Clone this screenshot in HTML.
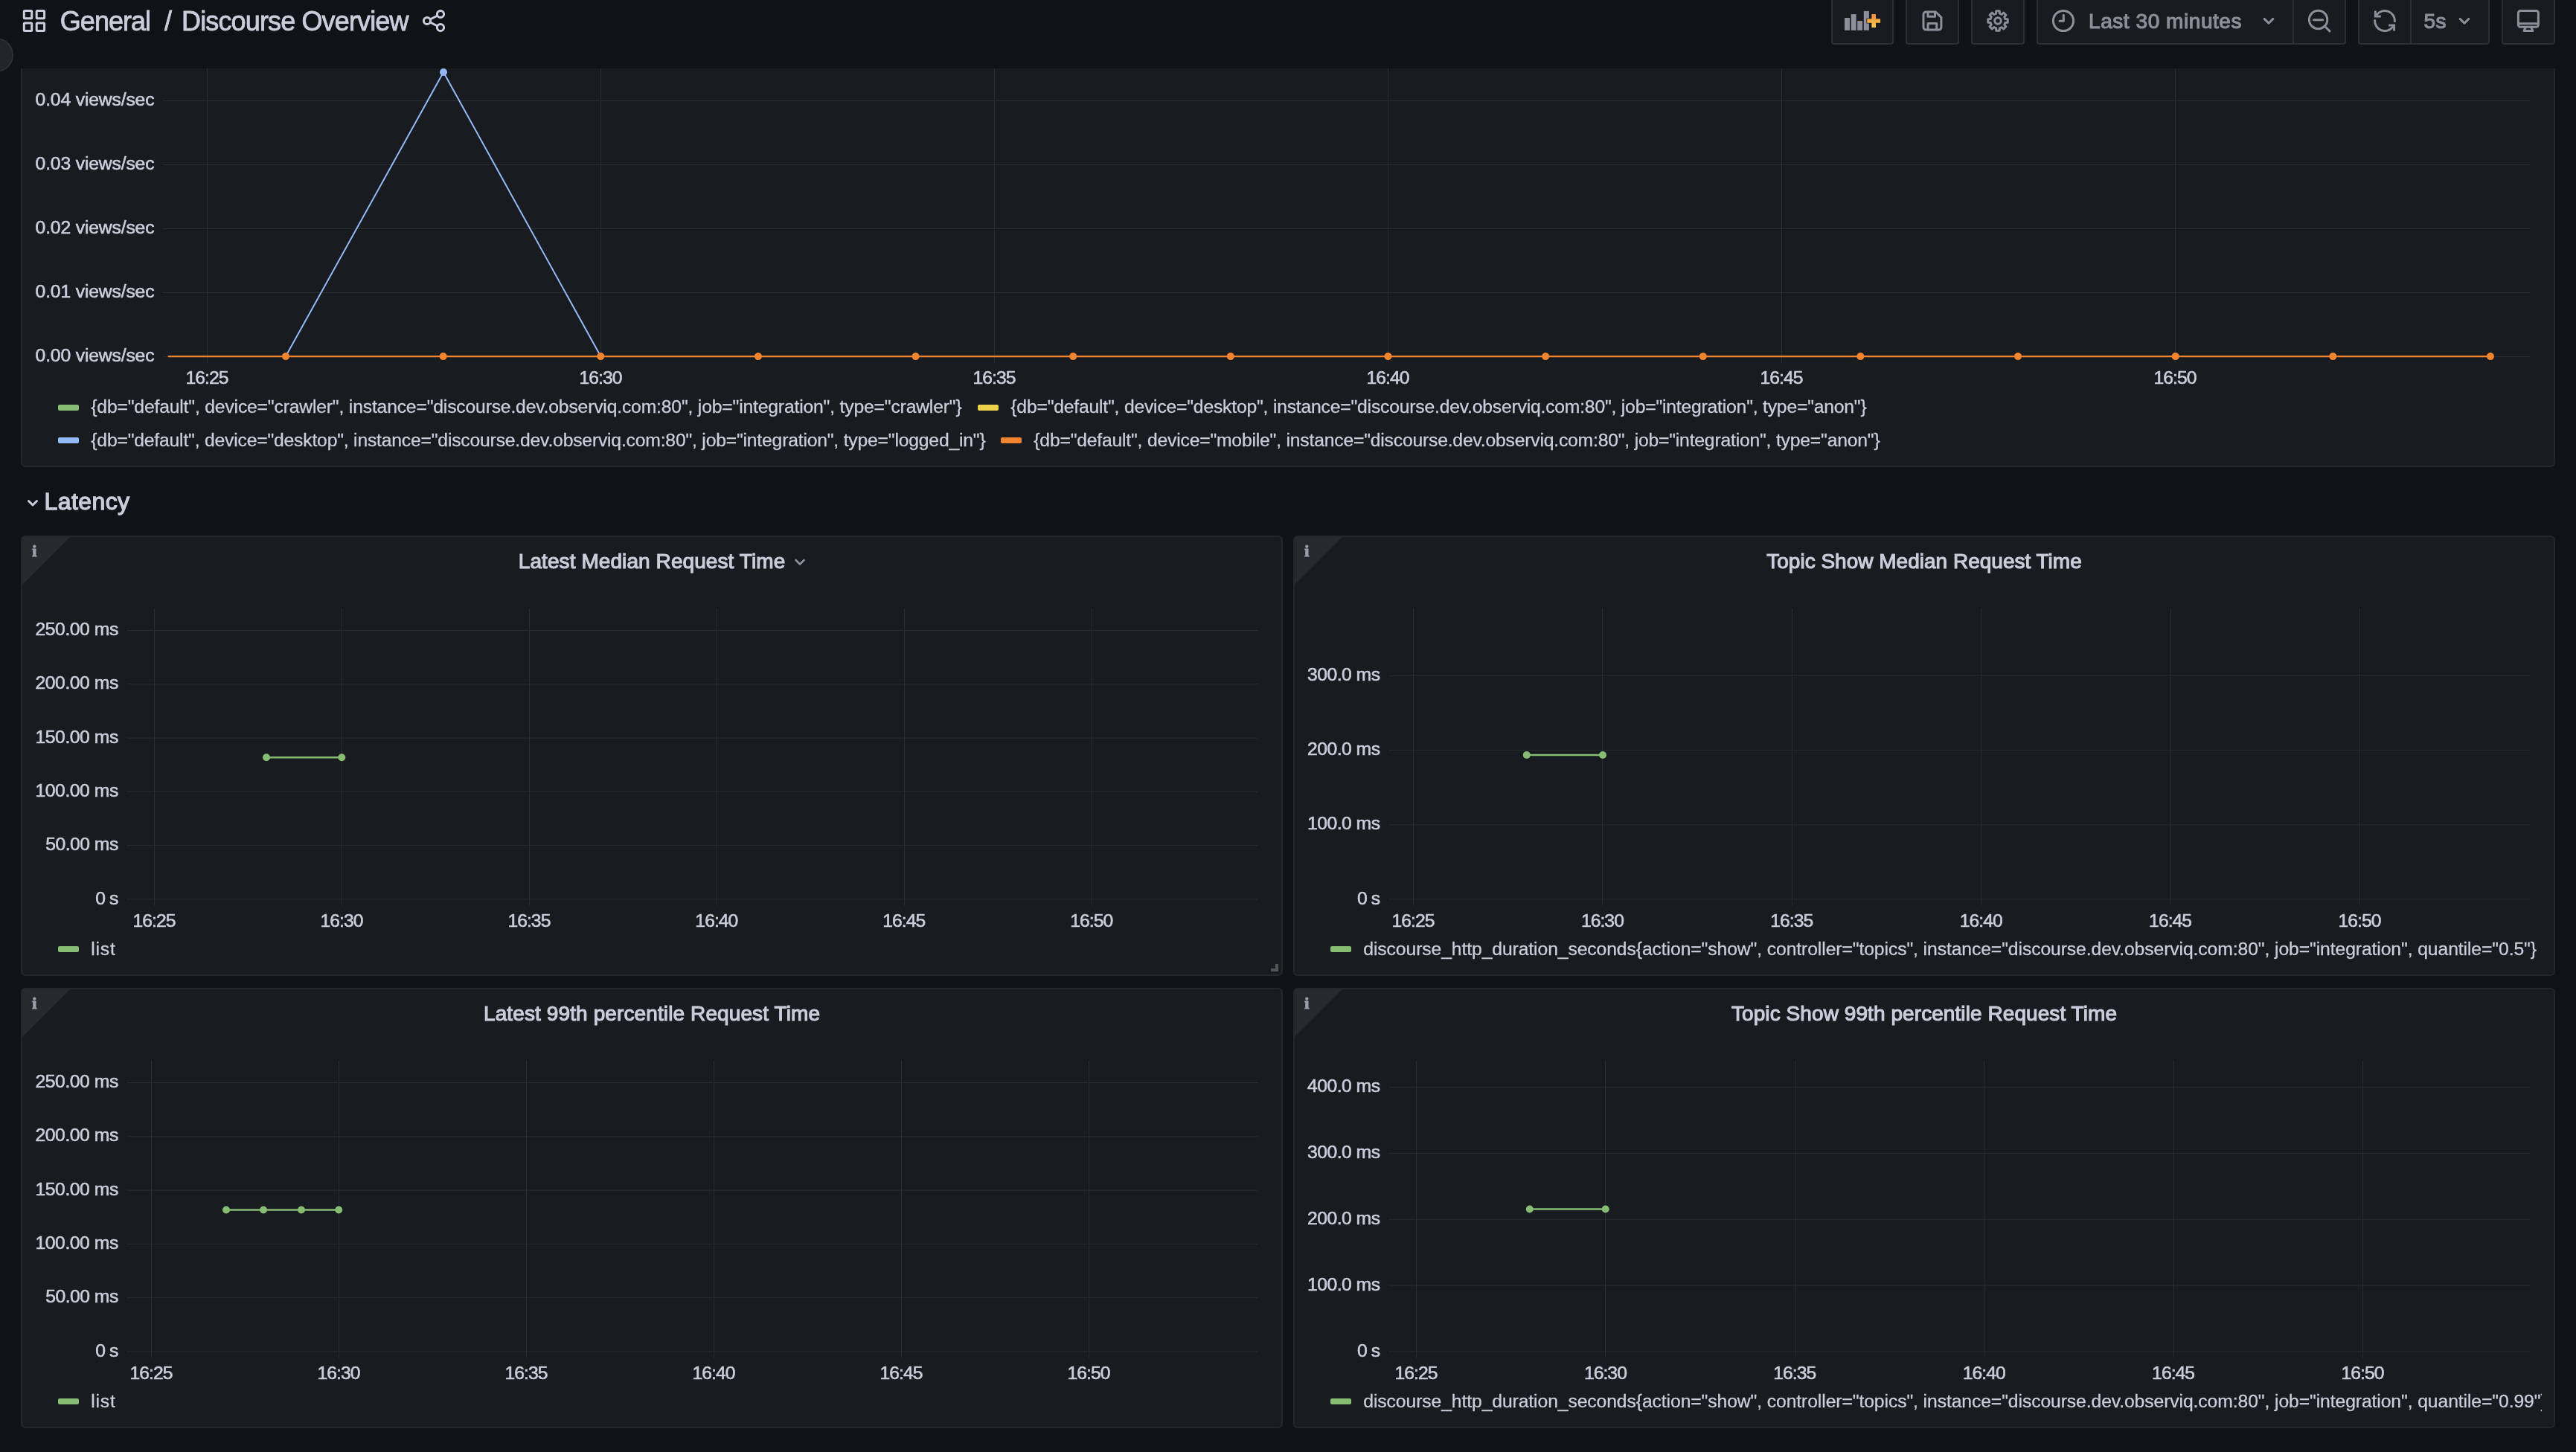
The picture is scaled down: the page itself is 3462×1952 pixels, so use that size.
<!DOCTYPE html>
<html lang="en"><head><meta charset="utf-8"><title>Discourse Overview - Grafana</title>
<style>
html,body{margin:0;padding:0;}
body{width:3462px;height:1952px;overflow:hidden;background:#111217;color:#ccccdc;font-family:"Liberation Sans",sans-serif;position:relative;}
.t{position:absolute;white-space:nowrap;margin:0;padding:0;font-weight:normal;}
.panel{position:absolute;box-sizing:border-box;background:#181b1f;border:2px solid #25272c;border-radius:6px;}
.abs{position:absolute;}
svg{position:absolute;left:0;top:0;overflow:visible;}
svg text{font-family:"Liberation Sans",sans-serif;font-size:24.7px;fill:#ccccdc;}
.toolbar{position:absolute;left:0;top:0;width:3462px;height:92px;background:#111217;}
.btn{position:absolute;box-sizing:border-box;top:-4px;height:64px;background:#181b1f;border:2px solid #2c2f35;border-radius:4px;}
.sw{position:absolute;width:28px;height:8px;border-radius:2px;}
.corner{position:absolute;width:0;height:0;border-left:64px solid #26292e;border-bottom:64px solid transparent;}
.ico{fill:none;stroke:#8e8e9b;stroke-width:3;stroke-linecap:round;stroke-linejoin:round;}
#app{position:absolute;left:0;top:0;width:3462px;height:1952px;will-change:transform;}
.r{-webkit-text-stroke:0.3px currentColor;}
svg text{stroke:#ccccdc;stroke-width:0.6px;}
</style></head><body><div id="app">

<section class="panel" style="left:28px;top:40px;width:3406px;height:588px"></section>
<svg width="3462" height="1952" viewBox="0 0 3462 1952" class="chart">
<g stroke="#2a2e31" stroke-width="1">
<line x1="218.4" y1="479.50" x2="3400.4" y2="479.50"/>
<line x1="218.4" y1="393.50" x2="3400.4" y2="393.50"/>
<line x1="218.4" y1="307.50" x2="3400.4" y2="307.50"/>
<line x1="218.4" y1="221.50" x2="3400.4" y2="221.50"/>
<line x1="218.4" y1="135.50" x2="3400.4" y2="135.50"/>
<line x1="278.5" y1="92" x2="278.5" y2="487.5"/>
<line x1="807.5" y1="92" x2="807.5" y2="487.5"/>
<line x1="1336.5" y1="92" x2="1336.5" y2="487.5"/>
<line x1="1865.5" y1="92" x2="1865.5" y2="487.5"/>
<line x1="2394.5" y1="92" x2="2394.5" y2="487.5"/>
<line x1="2923.5" y1="92" x2="2923.5" y2="487.5"/>
</g>
<polyline points="226.00,479.10 384.00,479.10 596.00,97.00 807.30,479.10 3347.00,479.10" fill="none" stroke="#93b9f7" stroke-width="2" stroke-linejoin="round"/>
<circle cx="596.00" cy="97.00" r="5" fill="#93b9f7"/>
<polyline points="225.80,479.10 3347.00,479.10" fill="none" stroke="#f2852e" stroke-width="2.3" stroke-linejoin="round"/>
<circle cx="384.00" cy="479.10" r="5" fill="#f2852e"/>
<circle cx="595.64" cy="479.10" r="5" fill="#f2852e"/>
<circle cx="807.28" cy="479.10" r="5" fill="#f2852e"/>
<circle cx="1018.92" cy="479.10" r="5" fill="#f2852e"/>
<circle cx="1230.56" cy="479.10" r="5" fill="#f2852e"/>
<circle cx="1442.20" cy="479.10" r="5" fill="#f2852e"/>
<circle cx="1653.84" cy="479.10" r="5" fill="#f2852e"/>
<circle cx="1865.48" cy="479.10" r="5" fill="#f2852e"/>
<circle cx="2077.12" cy="479.10" r="5" fill="#f2852e"/>
<circle cx="2288.76" cy="479.10" r="5" fill="#f2852e"/>
<circle cx="2500.40" cy="479.10" r="5" fill="#f2852e"/>
<circle cx="2712.04" cy="479.10" r="5" fill="#f2852e"/>
<circle cx="2923.68" cy="479.10" r="5" fill="#f2852e"/>
<circle cx="3135.32" cy="479.10" r="5" fill="#f2852e"/>
<circle cx="3346.96" cy="479.10" r="5" fill="#f2852e"/>
<g>
<text x="207.35" y="486.10" text-anchor="end" letter-spacing="-0.154">0.00 views/sec</text>
<text x="207.35" y="400.10" text-anchor="end" letter-spacing="-0.154">0.01 views/sec</text>
<text x="207.35" y="314.10" text-anchor="end" letter-spacing="-0.154">0.02 views/sec</text>
<text x="207.35" y="228.10" text-anchor="end" letter-spacing="-0.154">0.03 views/sec</text>
<text x="207.35" y="142.10" text-anchor="end" letter-spacing="-0.154">0.04 views/sec</text>
<text x="278.02" y="516.00" text-anchor="middle" letter-spacing="-0.953">16:25</text>
<text x="807.02" y="516.00" text-anchor="middle" letter-spacing="-0.953">16:30</text>
<text x="1336.02" y="516.00" text-anchor="middle" letter-spacing="-0.953">16:35</text>
<text x="1865.02" y="516.00" text-anchor="middle" letter-spacing="-0.953">16:40</text>
<text x="2394.02" y="516.00" text-anchor="middle" letter-spacing="-0.953">16:45</text>
<text x="2923.02" y="516.00" text-anchor="middle" letter-spacing="-0.953">16:50</text>
</g></svg>
<div class="legend">
<div class="sw" style="left:78px;top:544px;background:#87bd73"></div><span class="t r" style="left:122.30px;top:535.15px;font-size:24.7px;line-height:24.7px;letter-spacing:-0.168px;">{db="default", device="crawler", instance="discourse.dev.observiq.com:80", job="integration", type="crawler"}</span>
<div class="sw" style="left:1314px;top:544px;background:#ecd04a"></div><span class="t r" style="left:1358.30px;top:535.15px;font-size:24.7px;line-height:24.7px;letter-spacing:-0.194px;">{db="default", device="desktop", instance="discourse.dev.observiq.com:80", job="integration", type="anon"}</span>
<div class="sw" style="left:78px;top:588.3px;background:#93b9f7"></div><span class="t r" style="left:122.30px;top:580.05px;font-size:24.7px;line-height:24.7px;letter-spacing:-0.187px;">{db="default", device="desktop", instance="discourse.dev.observiq.com:80", job="integration", type="logged_in"}</span>
<div class="sw" style="left:1345px;top:588.3px;background:#f2852e"></div><span class="t r" style="left:1389.30px;top:580.05px;font-size:24.7px;line-height:24.7px;letter-spacing:-0.189px;">{db="default", device="mobile", instance="discourse.dev.observiq.com:80", job="integration", type="anon"}</span>
</div>
<div class="row">
<svg width="3462" height="1952"><path d="M38.5 673.5 L44 679 L49.5 673.5" fill="none" stroke="#ccccdc" stroke-width="3" stroke-linecap="round" stroke-linejoin="round"/></svg>
<h2 class="t" style="left:59.60px;top:658.00px;font-size:32px;line-height:32px;letter-spacing:0.404px;-webkit-text-stroke:1.28px currentColor;">Latency</h2>
</div>
<section class="panel" style="left:28px;top:720px;width:1696px;height:592px">
<div class="corner" style="left:0;top:0"></div>
</section>
<span class="t" style="left:41.74px;top:730.10px;font-size:22px;line-height:22px;font-weight:bold;color:#9d9dab;font-family:'Liberation Serif',serif;width:8px;text-align:center;margin-left:0.5px;-webkit-text-stroke:1.1px #9d9dab;">i</span>
<h2 class="t" style="left:696.75px;top:740.50px;font-size:28px;line-height:28px;letter-spacing:0.084px;-webkit-text-stroke:1.12px currentColor;">Latest Median Request Time</h2>
<svg width="3462" height="1952"><path d="M1069.55 753 l5.5 5.5 l5.5 -5.5" fill="none" stroke="#8e8e9b" stroke-width="2.6" stroke-linecap="round" stroke-linejoin="round"/></svg>
<svg width="3462" height="1952" viewBox="0 0 3462 1952" class="chart">
<g stroke="#2a2e31" stroke-width="1">
<line x1="170.5" y1="1209.00" x2="1690.5" y2="1209.00"/>
<line x1="170.5" y1="1136.70" x2="1690.5" y2="1136.70"/>
<line x1="170.5" y1="1064.40" x2="1690.5" y2="1064.40"/>
<line x1="170.5" y1="992.10" x2="1690.5" y2="992.10"/>
<line x1="170.5" y1="919.80" x2="1690.5" y2="919.80"/>
<line x1="170.5" y1="847.50" x2="1690.5" y2="847.50"/>
<line x1="207.5" y1="818" x2="207.5" y2="1217.0"/>
<line x1="459.5" y1="818" x2="459.5" y2="1217.0"/>
<line x1="711.5" y1="818" x2="711.5" y2="1217.0"/>
<line x1="963.5" y1="818" x2="963.5" y2="1217.0"/>
<line x1="1215.5" y1="818" x2="1215.5" y2="1217.0"/>
<line x1="1467.5" y1="818" x2="1467.5" y2="1217.0"/>
</g>
<polyline points="358.00,1018.25 459.25,1018.25" fill="none" stroke="#87bd73" stroke-width="2.3" stroke-linejoin="round"/>
<circle cx="358.00" cy="1018.25" r="5" fill="#87bd73"/>
<circle cx="459.25" cy="1018.25" r="5" fill="#87bd73"/>
<g>
<text x="158.28" y="1215.60" text-anchor="end" letter-spacing="-0.975">0 s</text>
<text x="158.74" y="1143.30" text-anchor="end" letter-spacing="-0.514">50.00 ms</text>
<text x="158.80" y="1071.00" text-anchor="end" letter-spacing="-0.448">100.00 ms</text>
<text x="158.80" y="998.70" text-anchor="end" letter-spacing="-0.448">150.00 ms</text>
<text x="158.80" y="926.40" text-anchor="end" letter-spacing="-0.448">200.00 ms</text>
<text x="158.80" y="854.10" text-anchor="end" letter-spacing="-0.448">250.00 ms</text>
<text x="207.02" y="1245.50" text-anchor="middle" letter-spacing="-0.953">16:25</text>
<text x="458.97" y="1245.50" text-anchor="middle" letter-spacing="-0.953">16:30</text>
<text x="710.92" y="1245.50" text-anchor="middle" letter-spacing="-0.953">16:35</text>
<text x="962.87" y="1245.50" text-anchor="middle" letter-spacing="-0.953">16:40</text>
<text x="1214.82" y="1245.50" text-anchor="middle" letter-spacing="-0.953">16:45</text>
<text x="1466.77" y="1245.50" text-anchor="middle" letter-spacing="-0.953">16:50</text>
</g></svg>
<div class="sw" style="left:78px;top:1272px;background:#87bd73"></div><span class="t r" style="left:122.30px;top:1263.65px;font-size:24.7px;line-height:24.7px;letter-spacing:0.771px;">list</span>
<div class="abs" style="left:1714px;top:1296px;width:4px;height:10px;background:#555"></div><div class="abs" style="left:1708px;top:1302px;width:10px;height:4px;background:#555"></div>
<section class="panel" style="left:1738px;top:720px;width:1696px;height:592px">
<div class="corner" style="left:0;top:0"></div>
</section>
<span class="t" style="left:1751.74px;top:730.10px;font-size:22px;line-height:22px;font-weight:bold;color:#9d9dab;font-family:'Liberation Serif',serif;width:8px;text-align:center;margin-left:0.5px;-webkit-text-stroke:1.1px #9d9dab;">i</span>
<h2 class="t" style="left:2374.25px;top:740.50px;font-size:28px;line-height:28px;letter-spacing:0.006px;-webkit-text-stroke:1.12px currentColor;">Topic Show Median Request Time</h2>
<svg width="3462" height="1952" viewBox="0 0 3462 1952" class="chart">
<g stroke="#2a2e31" stroke-width="1">
<line x1="1866.4" y1="1209.00" x2="3400.5" y2="1209.00"/>
<line x1="1866.4" y1="1108.83" x2="3400.5" y2="1108.83"/>
<line x1="1866.4" y1="1008.66" x2="3400.5" y2="1008.66"/>
<line x1="1866.4" y1="908.49" x2="3400.5" y2="908.49"/>
<line x1="1899.5" y1="818" x2="1899.5" y2="1217.0"/>
<line x1="2153.5" y1="818" x2="2153.5" y2="1217.0"/>
<line x1="2408.5" y1="818" x2="2408.5" y2="1217.0"/>
<line x1="2662.5" y1="818" x2="2662.5" y2="1217.0"/>
<line x1="2917.5" y1="818" x2="2917.5" y2="1217.0"/>
<line x1="3171.5" y1="818" x2="3171.5" y2="1217.0"/>
</g>
<polyline points="2051.75,1015.00 2154.00,1015.00" fill="none" stroke="#87bd73" stroke-width="2.3" stroke-linejoin="round"/>
<circle cx="2051.75" cy="1015.00" r="5" fill="#87bd73"/>
<circle cx="2154.00" cy="1015.00" r="5" fill="#87bd73"/>
<g>
<text x="1854.03" y="1215.60" text-anchor="end" letter-spacing="-0.975">0 s</text>
<text x="1854.49" y="1115.43" text-anchor="end" letter-spacing="-0.514">100.0 ms</text>
<text x="1854.49" y="1015.26" text-anchor="end" letter-spacing="-0.514">200.0 ms</text>
<text x="1854.49" y="915.09" text-anchor="end" letter-spacing="-0.514">300.0 ms</text>
<text x="1899.02" y="1245.50" text-anchor="middle" letter-spacing="-0.953">16:25</text>
<text x="2153.42" y="1245.50" text-anchor="middle" letter-spacing="-0.953">16:30</text>
<text x="2407.82" y="1245.50" text-anchor="middle" letter-spacing="-0.953">16:35</text>
<text x="2662.22" y="1245.50" text-anchor="middle" letter-spacing="-0.953">16:40</text>
<text x="2916.62" y="1245.50" text-anchor="middle" letter-spacing="-0.953">16:45</text>
<text x="3171.02" y="1245.50" text-anchor="middle" letter-spacing="-0.953">16:50</text>
</g></svg>
<div class="sw" style="left:1788px;top:1272px;background:#87bd73"></div><span class="t r" style="left:1832.30px;top:1263.65px;font-size:24.7px;line-height:24.7px;letter-spacing:-0.088px;">discourse_http_duration_seconds{action="show", controller="topics", instance="discourse.dev.observiq.com:80", job="integration", quantile="0.5"}</span>
<section class="panel" style="left:28px;top:1328px;width:1696px;height:592px">
<div class="corner" style="left:0;top:0"></div>
</section>
<span class="t" style="left:41.74px;top:1338.10px;font-size:22px;line-height:22px;font-weight:bold;color:#9d9dab;font-family:'Liberation Serif',serif;width:8px;text-align:center;margin-left:0.5px;-webkit-text-stroke:1.1px #9d9dab;">i</span>
<h2 class="t" style="left:650.00px;top:1348.50px;font-size:28px;line-height:28px;letter-spacing:0.110px;-webkit-text-stroke:1.12px currentColor;">Latest 99th percentile Request Time</h2>
<svg width="3462" height="1952" viewBox="0 0 3462 1952" class="chart">
<g stroke="#2a2e31" stroke-width="1">
<line x1="170.5" y1="1817.00" x2="1690.5" y2="1817.00"/>
<line x1="170.5" y1="1744.70" x2="1690.5" y2="1744.70"/>
<line x1="170.5" y1="1672.40" x2="1690.5" y2="1672.40"/>
<line x1="170.5" y1="1600.10" x2="1690.5" y2="1600.10"/>
<line x1="170.5" y1="1527.80" x2="1690.5" y2="1527.80"/>
<line x1="170.5" y1="1455.50" x2="1690.5" y2="1455.50"/>
<line x1="203.5" y1="1426" x2="203.5" y2="1825.0"/>
<line x1="455.5" y1="1426" x2="455.5" y2="1825.0"/>
<line x1="707.5" y1="1426" x2="707.5" y2="1825.0"/>
<line x1="959.5" y1="1426" x2="959.5" y2="1825.0"/>
<line x1="1211.5" y1="1426" x2="1211.5" y2="1825.0"/>
<line x1="1463.5" y1="1426" x2="1463.5" y2="1825.0"/>
</g>
<polyline points="304.00,1626.50 354.00,1626.50 405.00,1626.50 455.25,1626.50" fill="none" stroke="#87bd73" stroke-width="2.3" stroke-linejoin="round"/>
<circle cx="304.00" cy="1626.50" r="5" fill="#87bd73"/>
<circle cx="354.00" cy="1626.50" r="5" fill="#87bd73"/>
<circle cx="405.00" cy="1626.50" r="5" fill="#87bd73"/>
<circle cx="455.25" cy="1626.50" r="5" fill="#87bd73"/>
<g>
<text x="158.28" y="1823.60" text-anchor="end" letter-spacing="-0.975">0 s</text>
<text x="158.74" y="1751.30" text-anchor="end" letter-spacing="-0.514">50.00 ms</text>
<text x="158.80" y="1679.00" text-anchor="end" letter-spacing="-0.448">100.00 ms</text>
<text x="158.80" y="1606.70" text-anchor="end" letter-spacing="-0.448">150.00 ms</text>
<text x="158.80" y="1534.40" text-anchor="end" letter-spacing="-0.448">200.00 ms</text>
<text x="158.80" y="1462.10" text-anchor="end" letter-spacing="-0.448">250.00 ms</text>
<text x="203.02" y="1853.50" text-anchor="middle" letter-spacing="-0.953">16:25</text>
<text x="455.02" y="1853.50" text-anchor="middle" letter-spacing="-0.953">16:30</text>
<text x="707.02" y="1853.50" text-anchor="middle" letter-spacing="-0.953">16:35</text>
<text x="959.02" y="1853.50" text-anchor="middle" letter-spacing="-0.953">16:40</text>
<text x="1211.02" y="1853.50" text-anchor="middle" letter-spacing="-0.953">16:45</text>
<text x="1463.02" y="1853.50" text-anchor="middle" letter-spacing="-0.953">16:50</text>
</g></svg>
<div class="sw" style="left:78px;top:1880px;background:#87bd73"></div><span class="t r" style="left:122.30px;top:1871.65px;font-size:24.7px;line-height:24.7px;letter-spacing:0.771px;">list</span>
<section class="panel" style="left:1738px;top:1328px;width:1696px;height:592px">
<div class="corner" style="left:0;top:0"></div>
</section>
<span class="t" style="left:1751.74px;top:1338.10px;font-size:22px;line-height:22px;font-weight:bold;color:#9d9dab;font-family:'Liberation Serif',serif;width:8px;text-align:center;margin-left:0.5px;-webkit-text-stroke:1.1px #9d9dab;">i</span>
<h2 class="t" style="left:2327.00px;top:1348.50px;font-size:28px;line-height:28px;letter-spacing:0.075px;-webkit-text-stroke:1.12px currentColor;">Topic Show 99th percentile Request Time</h2>
<svg width="3462" height="1952" viewBox="0 0 3462 1952" class="chart">
<g stroke="#2a2e31" stroke-width="1">
<line x1="1866.4" y1="1817.00" x2="3400.5" y2="1817.00"/>
<line x1="1866.4" y1="1728.12" x2="3400.5" y2="1728.12"/>
<line x1="1866.4" y1="1639.25" x2="3400.5" y2="1639.25"/>
<line x1="1866.4" y1="1550.38" x2="3400.5" y2="1550.38"/>
<line x1="1866.4" y1="1461.50" x2="3400.5" y2="1461.50"/>
<line x1="1903.5" y1="1426" x2="1903.5" y2="1825.0"/>
<line x1="2157.5" y1="1426" x2="2157.5" y2="1825.0"/>
<line x1="2412.5" y1="1426" x2="2412.5" y2="1825.0"/>
<line x1="2666.5" y1="1426" x2="2666.5" y2="1825.0"/>
<line x1="2921.5" y1="1426" x2="2921.5" y2="1825.0"/>
<line x1="3175.5" y1="1426" x2="3175.5" y2="1825.0"/>
</g>
<polyline points="2055.80,1625.50 2157.70,1625.50" fill="none" stroke="#87bd73" stroke-width="2.3" stroke-linejoin="round"/>
<circle cx="2055.80" cy="1625.50" r="5" fill="#87bd73"/>
<circle cx="2157.70" cy="1625.50" r="5" fill="#87bd73"/>
<g>
<text x="1854.03" y="1823.60" text-anchor="end" letter-spacing="-0.975">0 s</text>
<text x="1854.49" y="1734.72" text-anchor="end" letter-spacing="-0.514">100.0 ms</text>
<text x="1854.49" y="1645.85" text-anchor="end" letter-spacing="-0.514">200.0 ms</text>
<text x="1854.49" y="1556.97" text-anchor="end" letter-spacing="-0.514">300.0 ms</text>
<text x="1854.49" y="1468.10" text-anchor="end" letter-spacing="-0.514">400.0 ms</text>
<text x="1903.02" y="1853.50" text-anchor="middle" letter-spacing="-0.953">16:25</text>
<text x="2157.42" y="1853.50" text-anchor="middle" letter-spacing="-0.953">16:30</text>
<text x="2411.82" y="1853.50" text-anchor="middle" letter-spacing="-0.953">16:35</text>
<text x="2666.22" y="1853.50" text-anchor="middle" letter-spacing="-0.953">16:40</text>
<text x="2920.62" y="1853.50" text-anchor="middle" letter-spacing="-0.953">16:45</text>
<text x="3175.02" y="1853.50" text-anchor="middle" letter-spacing="-0.953">16:50</text>
</g></svg>
<div class="abs" style="left:0;top:0;width:3415.5px;height:1952px;overflow:hidden"><div class="sw" style="left:1788px;top:1880px;background:#87bd73"></div><span class="t r" style="left:1832.30px;top:1871.65px;font-size:24.7px;line-height:24.7px;letter-spacing:-0.088px;">discourse_http_duration_seconds{action="show", controller="topics", instance="discourse.dev.observiq.com:80", job="integration", quantile="0.99"}</span></div>
<header class="toolbar">
<div class="abs" style="left:-28.3px;top:50.7px;width:46.4px;height:46.4px;box-sizing:border-box;border-radius:50%;background:#22252b;border:2px solid #2d3037"></div>
<svg width="3462" height="92">
<rect x="32.3" y="14.4" width="10.4" height="10.4" rx="1" fill="none" stroke="#ccccdc" stroke-width="3"/>
<rect x="49.2" y="14.4" width="10.4" height="10.4" rx="1" fill="none" stroke="#ccccdc" stroke-width="3"/>
<rect x="32.3" y="31" width="10.4" height="10.4" rx="1" fill="none" stroke="#ccccdc" stroke-width="3"/>
<rect x="49.2" y="31" width="10.4" height="10.4" rx="1" fill="none" stroke="#ccccdc" stroke-width="3"/>
<g fill="none" stroke="#ccccdc" stroke-width="3"><circle cx="592" cy="19" r="4.6"/><circle cx="574" cy="28" r="4.6"/><circle cx="592" cy="37" r="4.6"/><path d="M578.1 26 L587.9 21 M578.1 30 L587.9 35"/></g>
</svg>
<a class="t r" style="left:80.80px;top:10.50px;font-size:36px;line-height:36px;letter-spacing:-0.963px;-webkit-text-stroke:0.8px currentColor;">General</a>
<span class="t r" style="left:221.00px;top:10.50px;font-size:36px;line-height:36px;-webkit-text-stroke:0.8px currentColor;">/</span>
<a class="t r" style="left:244.00px;top:10.50px;font-size:36px;line-height:36px;letter-spacing:-0.858px;-webkit-text-stroke:0.8px currentColor;">Discourse Overview</a>
<div class="btn" role="button" style="left:2461px;width:84px"></div>
<div class="btn" role="button" style="left:2561px;width:72px"></div>
<div class="btn" role="button" style="left:2649px;width:72px"></div>
<div class="btn" role="button" style="left:2737px;width:416px"></div>
<div class="btn" role="button" style="left:3169px;width:177px"></div>
<div class="btn" role="button" style="left:3362px;width:72px"></div>
<div class="abs" style="left:3081px;top:0;width:2px;height:58px;background:#2c2f35"></div>
<div class="abs" style="left:3239px;top:0;width:2px;height:58px;background:#2c2f35"></div>
<svg width="3462" height="92">
<defs><linearGradient id="pg" x1="0" y1="0" x2="0" y2="1"><stop offset="0" stop-color="#f0893f"/><stop offset="1" stop-color="#fbce46"/></linearGradient></defs>
<g fill="#8e8e9b"><rect x="2479" y="24" width="7" height="16.8"/><rect x="2487.7" y="19.1" width="6.9" height="21.7"/><rect x="2496.2" y="28.1" width="6.9" height="12.7"/><rect x="2504.8" y="14.9" width="7.1" height="25.9"/></g>
<path d="M2515.4 19.1h5.6v6.1h6.1v5.6h-6.1v6.1h-5.6v-6.1h-6.1v-5.6h6.1z" fill="url(#pg)" stroke="#181b1f" stroke-width="1.6" paint-order="stroke"/>
<g class="ico"><path d="M2589 16h12.5l7.4 7.4v13.2a3.5 3.5 0 0 1 -3.5 3.5h-16.9a3.5 3.5 0 0 1 -3.5 -3.5v-17.1a3.5 3.5 0 0 1 3.5 -3.5z"/><path d="M2591 16v6.3h9.5v-6.3"/><path d="M2591 40v-8.5h11.8v8.5"/></g>
<g class="ico"><path d="M2682.58 18.09 L2682.73 14.79 L2687.27 14.79 L2687.42 18.09 L2690.29 19.28 L2692.74 17.06 L2695.94 20.26 L2693.72 22.71 L2694.91 25.58 L2698.21 25.73 L2698.21 30.27 L2694.91 30.42 L2693.72 33.29 L2695.94 35.74 L2692.74 38.94 L2690.29 36.72 L2687.42 37.91 L2687.27 41.21 L2682.73 41.21 L2682.58 37.91 L2679.71 36.72 L2677.26 38.94 L2674.06 35.74 L2676.28 33.29 L2675.09 30.42 L2671.79 30.27 L2671.79 25.73 L2675.09 25.58 L2676.28 22.71 L2674.06 20.26 L2677.26 17.06 L2679.71 19.28Z"/><circle cx="2685" cy="28" r="4.3"/></g>
<g class="ico"><circle cx="2773" cy="28" r="13.6"/><path d="M2773.3 20.2v8h-5.4"/></g>
<path class="ico" d="M3043.2 25.4 l5.8 5.8 l5.8 -5.8"/>
<path class="ico" d="M3306.2 25.4 l5.8 5.8 l5.8 -5.8"/>
<g class="ico"><circle cx="3115.6" cy="26.5" r="12.2"/><path d="M3124.6 35.5 L3131 41.9 M3109.5 26.7h12.2"/></g>
<g class="ico"><path d="M3194.6 19.4 A13.4 13.4 0 0 1 3218.4 28.6"/><path d="M3191.6 27.4 A13.4 13.4 0 0 0 3215.4 36.6"/><path d="M3192.4 14.5 V21.9 H3199.8" stroke-linecap="butt" stroke-linejoin="miter"/><path d="M3217.6 41.5 V34.1 H3210.2" stroke-linecap="butt" stroke-linejoin="miter"/></g>
<g class="ico"><rect x="3384.4" y="14.5" width="27" height="21.7" rx="3"/><path d="M3385 31.8h26"/><path d="M3394.2 36.6 l-2.2 4.9 h11.9 l-2.2 -4.9"/></g>
</svg>
<span class="t" style="left:2807.00px;top:14.80px;font-size:28px;line-height:28px;letter-spacing:0.559px;color:#8e8e9b;-webkit-text-stroke:1.12px currentColor;">Last 30 minutes</span>
<span class="t" style="left:3257.60px;top:14.80px;font-size:28px;line-height:28px;letter-spacing:0.428px;color:#8e8e9b;-webkit-text-stroke:1.12px currentColor;">5s</span>
</header>
</div></body></html>
